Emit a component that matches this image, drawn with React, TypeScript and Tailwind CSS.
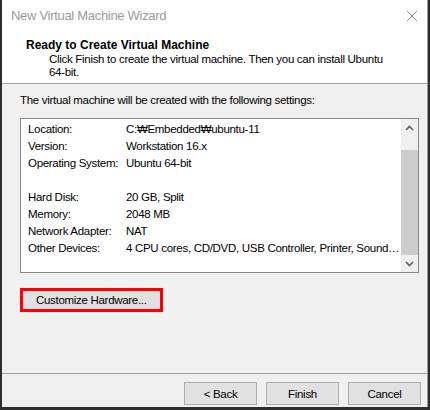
import React from "react";

const font = { fontFamily: '"Liberation Sans", "DejaVu Sans", sans-serif' };

const settings: [string, string][] = [
  ["Location:", "C:\u20A9Embedded\u20A9ubuntu-11"],
  ["Version:", "Workstation 16.x"],
  ["Operating System:", "Ubuntu 64-bit"],
  ["", ""],
  ["Hard Disk:", "20 GB, Split"],
  ["Memory:", "2048 MB"],
  ["Network Adapter:", "NAT"],
  ["Other Devices:", "4 CPU cores, CD/DVD, USB Controller, Printer, Sound\u2026"],
];

function Chevron({ up }: { up?: boolean }) {
  return (
    <svg width="9" height="6" viewBox="0 0 9 6">
      <path
        d={up ? "M1 5 L4.5 1.5 L8 5" : "M1 1 L4.5 4.5 L8 1"}
        fill="none"
        stroke="#606060"
        strokeWidth="1.6"
      />
    </svg>
  );
}

export default function App() {
  return (
    <div
      className="w-[430px] h-[410px] bg-[#2e2e2e] pl-[2px] pr-[2px] pb-[3px] text-[11.5px] tracking-[-0.3px] text-black"
      style={font}
    >
      <div className="h-full flex flex-col bg-[#f0f0f0] border-r border-[#9a9a9a]">
        {/* TITLE + HEADER */}
        <div className="bg-white border-b border-[#a0a0a0] h-[84px] flex flex-col">
          <div className="h-[31px] flex items-center justify-between pl-[9px] pr-[9px]">
            <span className="text-[13px] text-[#9b9b9b]">New Virtual Machine Wizard</span>
            <svg width="12" height="12" viewBox="0 0 12 12">
              <path d="M1 1 L11 11 M11 1 L1 11" stroke="#8a8a8a" strokeWidth="1" fill="none" />
            </svg>
          </div>
          <div className="pl-[24px] pt-[7px] font-bold text-[12px] tracking-[0px] leading-[14px]">
            Ready to Create Virtual Machine
          </div>
          <div className="pl-[47px] pt-[1px] leading-[13px]">
            Click Finish to create the virtual machine. Then you can install Ubuntu
            <br />
            64-bit.
          </div>
        </div>

        {/* BODY */}
        <div className="flex-1 pl-[18px] pt-[9px]">
          <div className="leading-[14px]">
            The virtual machine will be created with the following settings:
          </div>
          <div className="mt-[11px] w-[399px] h-[155px] border border-[#828790] bg-white flex">
            <div className="flex-1 pl-[7px] pt-[2px] overflow-hidden">
              {settings.map(([k, v], i) => (
                <div key={i} className="h-[17px] flex items-center whitespace-nowrap">
                  <span className="w-[98px] shrink-0">{k}</span>
                  <span>{v}</span>
                </div>
              ))}
            </div>
            <div className="w-[17px] bg-[#f0f0f0] flex flex-col">
              <div className="h-[17px] flex items-center justify-center">
                <Chevron up />
              </div>
              <div className="h-[14px]" />
              <div className="h-[105px] bg-[#cdcdcd]" />
              <div className="flex-1 flex items-center justify-center">
                <Chevron />
              </div>
            </div>
          </div>
          <button className="mt-[15px] w-[143px] h-[24px] border-[3px] border-[#ff0000] bg-[#e1e1e1] text-left pl-[13px] leading-[16px]">
            Customize Hardware...
          </button>
        </div>

        {/* FOOTER */}
        <div className="border-t border-[#a0a0a0] h-[34px] flex items-start justify-end gap-[9px] pt-[8px] pr-[6px]">
          {["< Back", "Finish", "Cancel"].map((t) => (
            <button
              key={t}
              className="w-[73px] h-[23px] bg-[#e1e1e1] border border-[#adadad] leading-[20px]"
            >
              {t}
            </button>
          ))}
        </div>
      </div>
    </div>
  );
}
